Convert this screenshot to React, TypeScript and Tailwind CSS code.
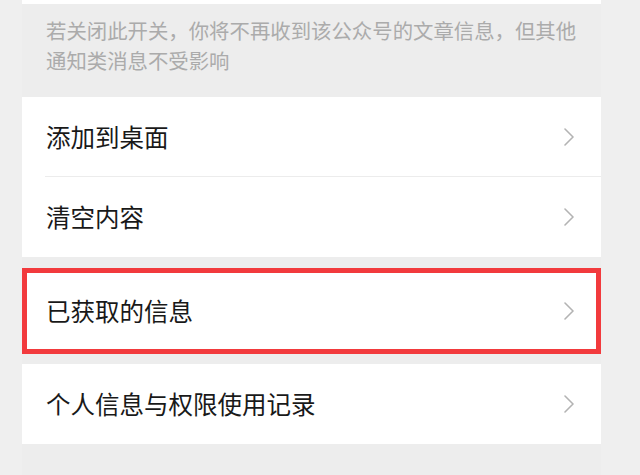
const font = { fontFamily: '"Noto Sans CJK SC", "Noto Sans", sans-serif' };

function Chevron() {
  return (
    <svg width="10" height="18" viewBox="0 0 10 18" fill="none" className="shrink-0">
      <path d="M1 1 L9 9 L1 17" stroke="#b3b3b3" strokeWidth="1.6" strokeLinecap="round" strokeLinejoin="round" />
    </svg>
  );
}

function Row({ label, divider = false }: { label: string; divider?: boolean }) {
  return (
    <div className="relative flex h-[80px] items-center justify-between pl-[24px] pr-[27px]">
      <span className="text-[24.5px] leading-none text-[#191919]">{label}</span>
      <Chevron />
      {divider ? <div className="absolute bottom-0 left-[23px] right-0 h-px bg-[#ececec]" /> : null}
    </div>
  );
}

export default function App() {
  return (
    <div className="h-[475px] w-[640px] overflow-hidden bg-[#efefef]" style={font}>
      <div className="ml-[22px] flex h-full w-[579px] flex-col bg-[#ededed]">
        <div className="h-[4px] bg-white" />
        <p className="pb-[22px] pl-[24px] pr-[10px] pt-[11px] text-[20.4px] leading-[30px] text-[#ababab]">
          若关闭此开关，你将不再收到该公众号的文章信息，但其他通知类消息不受影响
        </p>
        <div className="bg-white">
          <Row label="添加到桌面" divider />
          <Row label="清空内容" />
        </div>
        <div className="mt-[11px] border-[5px] border-[#f23a3d] bg-white">
          <div className="flex h-[76px] items-center justify-between pl-[19px] pr-[22px]">
            <span className="text-[24.5px] leading-none text-[#191919]">已获取的信息</span>
            <Chevron />
          </div>
        </div>
        <div className="mt-[10px] bg-white">
          <Row label="个人信息与权限使用记录" />
        </div>
      </div>
    </div>
  );
}
